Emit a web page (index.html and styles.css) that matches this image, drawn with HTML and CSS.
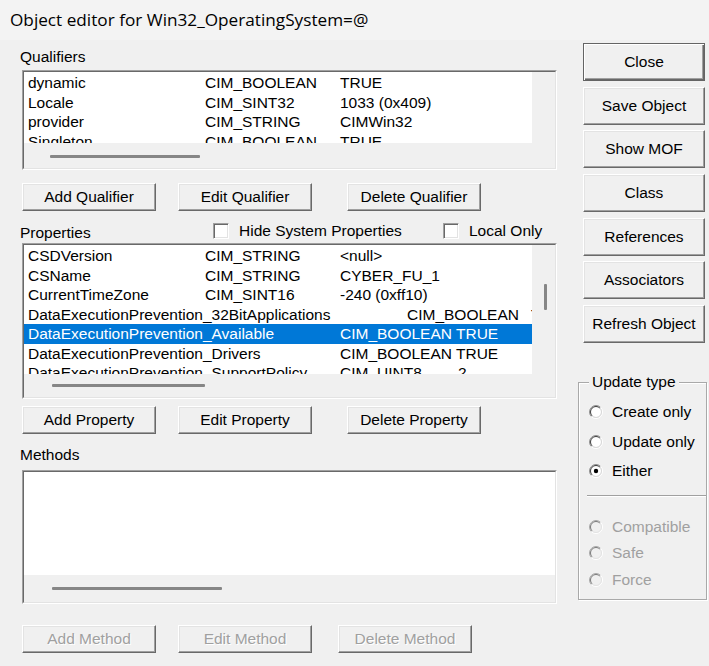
FILE: index.html
```html
<!DOCTYPE html>
<html>
<head>
<meta charset="utf-8">
<title>Object editor</title>
<link rel="stylesheet" href="styles.css">
</head>
<body>
<div class="title">Object editor for Win32_OperatingSystem=@</div>
<div class="dialog">
  <div class="left">
    <div class="label">Qualifiers</div>
    <div class="listbox qual">
      <div class="lb-inner">
        <div class="list">
          <div class="row"><span class="c1">dynamic</span><span class="c2">CIM_BOOLEAN</span><span>TRUE</span></div>
          <div class="row"><span class="c1">Locale</span><span class="c2">CIM_SINT32</span><span>1033 (0x409)</span></div>
          <div class="row"><span class="c1">provider</span><span class="c2">CIM_STRING</span><span>CIMWin32</span></div>
          <div class="row"><span class="c1">Singleton</span><span class="c2">CIM_BOOLEAN</span><span>TRUE</span></div>
        </div>
        <div class="vstrip"></div>
        <div class="hstrip"><div class="hthumb"></div></div>
      </div>
    </div>
    <div class="btnrow r1">
      <div class="btn">Add Qualifier</div>
      <div class="btn b2">Edit Qualifier</div>
      <div class="btn b3">Delete Qualifier</div>
    </div>

    <div class="prophead">
      <span class="plabel">Properties</span>
      <span class="chk w1"><span class="box"></span>Hide System Properties</span>
      <span class="chk"><span class="box"></span>Local Only</span>
    </div>
    <div class="listbox props">
      <div class="lb-inner">
        <div class="list">
          <div class="row"><span class="c1">CSDVersion</span><span class="c2">CIM_STRING</span><span>&lt;null&gt;</span></div>
          <div class="row"><span class="c1">CSName</span><span class="c2">CIM_STRING</span><span>CYBER_FU_1</span></div>
          <div class="row"><span class="c1">CurrentTimeZone</span><span class="c2">CIM_SINT16</span><span>-240 (0xff10)</span></div>
          <div class="row"><span class="cw">DataExecutionPrevention_32BitApplications</span><span class="cb">CIM_BOOLEAN</span><span>TRUE</span></div>
          <div class="row sel"><span class="cd">DataExecutionPrevention_Available</span><span>CIM_BOOLEAN TRUE</span></div>
          <div class="row"><span class="cd">DataExecutionPrevention_Drivers</span><span>CIM_BOOLEAN TRUE</span></div>
          <div class="row"><span class="cd">DataExecutionPrevention_SupportPolicy</span><span class="cu">CIM_UINT8</span><span>2</span></div>
        </div>
        <div class="vstrip"><div class="vthumb"></div></div>
        <div class="hstrip"><div class="hthumb"></div></div>
      </div>
    </div>
    <div class="btnrow r2">
      <div class="btn">Add Property</div>
      <div class="btn b2">Edit Property</div>
      <div class="btn b3">Delete Property</div>
    </div>

    <div class="label mlabel">Methods</div>
    <div class="listbox methods">
      <div class="lb-inner">
        <div class="list"></div>
        <div class="hstrip"><div class="hthumb"></div></div>
      </div>
    </div>
    <div class="btnrow r3">
      <div class="btn dis">Add Method</div>
      <div class="btn b2 dis">Edit Method</div>
      <div class="btn b3m dis">Delete Method</div>
    </div>
  </div>

  <div class="right">
    <div class="rbtns">
      <div class="btn rbtn def">Close</div>
      <div class="btn rbtn">Save Object</div>
      <div class="btn rbtn">Show MOF</div>
      <div class="btn rbtn">Class</div>
      <div class="btn rbtn">References</div>
      <div class="btn rbtn">Associators</div>
      <div class="btn rbtn">Refresh Object</div>
    </div>
    <div class="group">
      <div class="legend">Update type</div>
      <div class="radios">
        <div class="radio"><svg class="rc" width="14" height="14" viewBox="0 0 14 14"><circle cx="7" cy="7" r="5" fill="#fff"/><path d="M2.4 11.6A6.5 6.5 0 0 1 11.6 2.4" fill="none" stroke="#909090"/><path d="M3.1 10.9A5.5 5.5 0 0 1 10.9 3.1" fill="none" stroke="#404040"/><path d="M11.6 2.4A6.5 6.5 0 0 1 2.4 11.6" fill="none" stroke="#ffffff"/><path d="M10.9 3.1A5.5 5.5 0 0 1 3.1 10.9" fill="none" stroke="#d8d8d8"/></svg><span>Create only</span></div>
        <div class="radio"><svg class="rc" width="14" height="14" viewBox="0 0 14 14"><circle cx="7" cy="7" r="5" fill="#fff"/><path d="M2.4 11.6A6.5 6.5 0 0 1 11.6 2.4" fill="none" stroke="#909090"/><path d="M3.1 10.9A5.5 5.5 0 0 1 10.9 3.1" fill="none" stroke="#404040"/><path d="M11.6 2.4A6.5 6.5 0 0 1 2.4 11.6" fill="none" stroke="#ffffff"/><path d="M10.9 3.1A5.5 5.5 0 0 1 3.1 10.9" fill="none" stroke="#d8d8d8"/></svg><span>Update only</span></div>
        <div class="radio"><svg class="rc" width="14" height="14" viewBox="0 0 14 14"><circle cx="7" cy="7" r="5" fill="#fff"/><path d="M2.4 11.6A6.5 6.5 0 0 1 11.6 2.4" fill="none" stroke="#909090"/><path d="M3.1 10.9A5.5 5.5 0 0 1 10.9 3.1" fill="none" stroke="#404040"/><path d="M11.6 2.4A6.5 6.5 0 0 1 2.4 11.6" fill="none" stroke="#ffffff"/><path d="M10.9 3.1A5.5 5.5 0 0 1 3.1 10.9" fill="none" stroke="#d8d8d8"/><circle cx="7" cy="7" r="2.2" fill="#000"/></svg><span>Either</span></div>
      </div>
      <div class="sep"></div>
      <div class="radios dis">
        <div class="radio"><svg class="rc" width="14" height="14" viewBox="0 0 14 14"><circle cx="7" cy="7" r="5" fill="#f0f0f0"/><path d="M2.4 11.6A6.5 6.5 0 0 1 11.6 2.4" fill="none" stroke="#a8a8a8"/><path d="M3.1 10.9A5.5 5.5 0 0 1 10.9 3.1" fill="none" stroke="#7a7a7a"/><path d="M11.6 2.4A6.5 6.5 0 0 1 2.4 11.6" fill="none" stroke="#ffffff"/><path d="M10.9 3.1A5.5 5.5 0 0 1 3.1 10.9" fill="none" stroke="#e3e3e3"/></svg><span>Compatible</span></div>
        <div class="radio"><svg class="rc" width="14" height="14" viewBox="0 0 14 14"><circle cx="7" cy="7" r="5" fill="#f0f0f0"/><path d="M2.4 11.6A6.5 6.5 0 0 1 11.6 2.4" fill="none" stroke="#a8a8a8"/><path d="M3.1 10.9A5.5 5.5 0 0 1 10.9 3.1" fill="none" stroke="#7a7a7a"/><path d="M11.6 2.4A6.5 6.5 0 0 1 2.4 11.6" fill="none" stroke="#ffffff"/><path d="M10.9 3.1A5.5 5.5 0 0 1 3.1 10.9" fill="none" stroke="#e3e3e3"/></svg><span>Safe</span></div>
        <div class="radio"><svg class="rc" width="14" height="14" viewBox="0 0 14 14"><circle cx="7" cy="7" r="5" fill="#f0f0f0"/><path d="M2.4 11.6A6.5 6.5 0 0 1 11.6 2.4" fill="none" stroke="#a8a8a8"/><path d="M3.1 10.9A5.5 5.5 0 0 1 10.9 3.1" fill="none" stroke="#7a7a7a"/><path d="M11.6 2.4A6.5 6.5 0 0 1 2.4 11.6" fill="none" stroke="#ffffff"/><path d="M10.9 3.1A5.5 5.5 0 0 1 3.1 10.9" fill="none" stroke="#e3e3e3"/></svg><span>Force</span></div>
      </div>
    </div>
  </div>
</div>
</body>
</html>
```

FILE: styles.css
```css
* { box-sizing: border-box; }
html, body { margin: 0; padding: 0; }
body {
  width: 709px;
  height: 666px;
  overflow: hidden;
  background: #f0f0f0;
  font-family: "Liberation Sans", Arial, sans-serif;
  font-size: 15.5px;
  color: #000;
}
.title {
  height: 40px;
  background: #f3f3f3;
  padding-left: 10px;
  font-family: "Open Sans", sans-serif;
  font-size: 17.2px;
  line-height: 40px;
  white-space: nowrap;
}
.dialog { display: flex; }
.left { width: 537px; margin-left: 20px; padding-top: 8px; flex: none; }
.label { height: 18px; line-height: 18px; }

/* list boxes */
.listbox {
  margin-left: 2px;
  width: 535px;
  border: 1px solid;
  border-color: #a0a0a0 #ffffff #ffffff #a0a0a0;
}
.lb-inner {
  height: 100%;
  border: 1px solid;
  border-color: #696969 #e3e3e3 #e3e3e3 #696969;
  display: grid;
  grid-template-columns: 508px 1fr;
  overflow: hidden;
}
.list { background: #fff; overflow: hidden; padding-top: 1px; }
.row {
  display: flex;
  height: 19.5px;
  line-height: 19.5px;
  padding-left: 4px;
  white-space: nowrap;
}
.row.sel { background: #0078d7; color: #fff; }
.c1 { width: 177px; flex: none; }
.c2 { width: 135px; flex: none; }
.cw { width: 379px; flex: none; }
.cb { width: 124px; flex: none; }
.cd { width: 312px; flex: none; }
.cu { width: 118px; flex: none; }
.hstrip { grid-column: 1 / -1; }
.hthumb { height: 3px; background: #868686; border-radius: 1px; }
.vthumb { width: 3px; background: #868686; border-radius: 1px; }

.qual { height: 100px; margin-top: 4px; }
.qual .lb-inner { grid-template-rows: 71px 1fr; }
.qual .hthumb { margin: 12px 0 0 26px; width: 150px; }

.props { height: 156px; }
.props .lb-inner { grid-template-rows: 129px 1fr; }
.props .vthumb { margin: 39px 0 0 12px; height: 26px; }
.props .hthumb { margin: 10px 0 0 28px; width: 153px; }

.methods { height: 134px; margin-top: 6px; }
.methods .lb-inner { grid-template-columns: 1fr; grid-template-rows: 103px 1fr; }
.methods .hthumb { margin: 12px 0 0 28px; width: 170px; }

/* buttons */
.btnrow { display: flex; margin-left: 2px; height: 28px; }
.r1 { margin-top: 13px; }
.r2 { margin-top: 7px; }
.r3 { margin-top: 21px; }
.btn {
  width: 134px;
  height: 28px;
  flex: none;
  display: flex;
  align-items: center;
  justify-content: center;
  background: #f0f0f0;
  border: 1px solid;
  border-color: #ffffff #696969 #696969 #ffffff;
  box-shadow: inset -1px -1px #a0a0a0, inset 1px 1px #e3e3e3;
  white-space: nowrap;
}
.b2 { margin-left: 22px; }
.b3 { margin-left: 35px; }
.b3m { margin-left: 26px; }
.btn.dis { color: #a0a0a0; text-shadow: 1px 1px #ffffff; }

/* properties header */
.prophead { display: flex; align-items: center; height: 24px; margin-top: 8px; }
.plabel { width: 193px; padding-top: 3px; flex: none; }
.chk { display: flex; align-items: center; flex: none; }
.chk.w1 { width: 230px; }
.box {
  width: 16px;
  height: 16px;
  margin-right: 10px;
  background: #fff;
  border: 1px solid;
  border-color: #a0a0a0 #ffffff #ffffff #a0a0a0;
  box-shadow: inset 1px 1px #696969, inset -1px -1px #e3e3e3;
}
.mlabel { margin-top: 12px; }

/* right column */
.right { width: 129px; margin-left: 21px; flex: none; }
.rbtns { display: flex; flex-direction: column; gap: 5.67px; padding-top: 3px; }
.rbtn { width: 122px; height: 38px; margin-left: 5px; }
.rbtn.def {
  border-color: #646464;
  box-shadow: inset 1px 1px #ffffff, inset -1px -1px #696969, inset -2px -2px #a0a0a0;
}

.group {
  margin-top: 39px;
  height: 218px;
  border: 1px solid #a9a9a9;
  box-shadow: inset 1px 1px #ffffff, 1px 1px #ffffff;
}
.legend {
  margin: -10px 0 0 10px;
  padding: 0 3px;
  width: fit-content;
  height: 18px;
  line-height: 18px;
  background: #f0f0f0;
}
.radios { margin-top: 6.5px; }
.radio { display: flex; align-items: center; height: 29.5px; padding-left: 10px; }
.rc { flex: none; margin-right: 9px; }
.sep {
  margin: 9px 0 0 8px;
  height: 2px;
  border-top: 1px solid #a0a0a0;
  border-bottom: 1px solid #ffffff;
}
.radios.dis { margin-top: 16.75px; color: #a0a0a0; }
.radios.dis .radio { height: 26.5px; }
```
